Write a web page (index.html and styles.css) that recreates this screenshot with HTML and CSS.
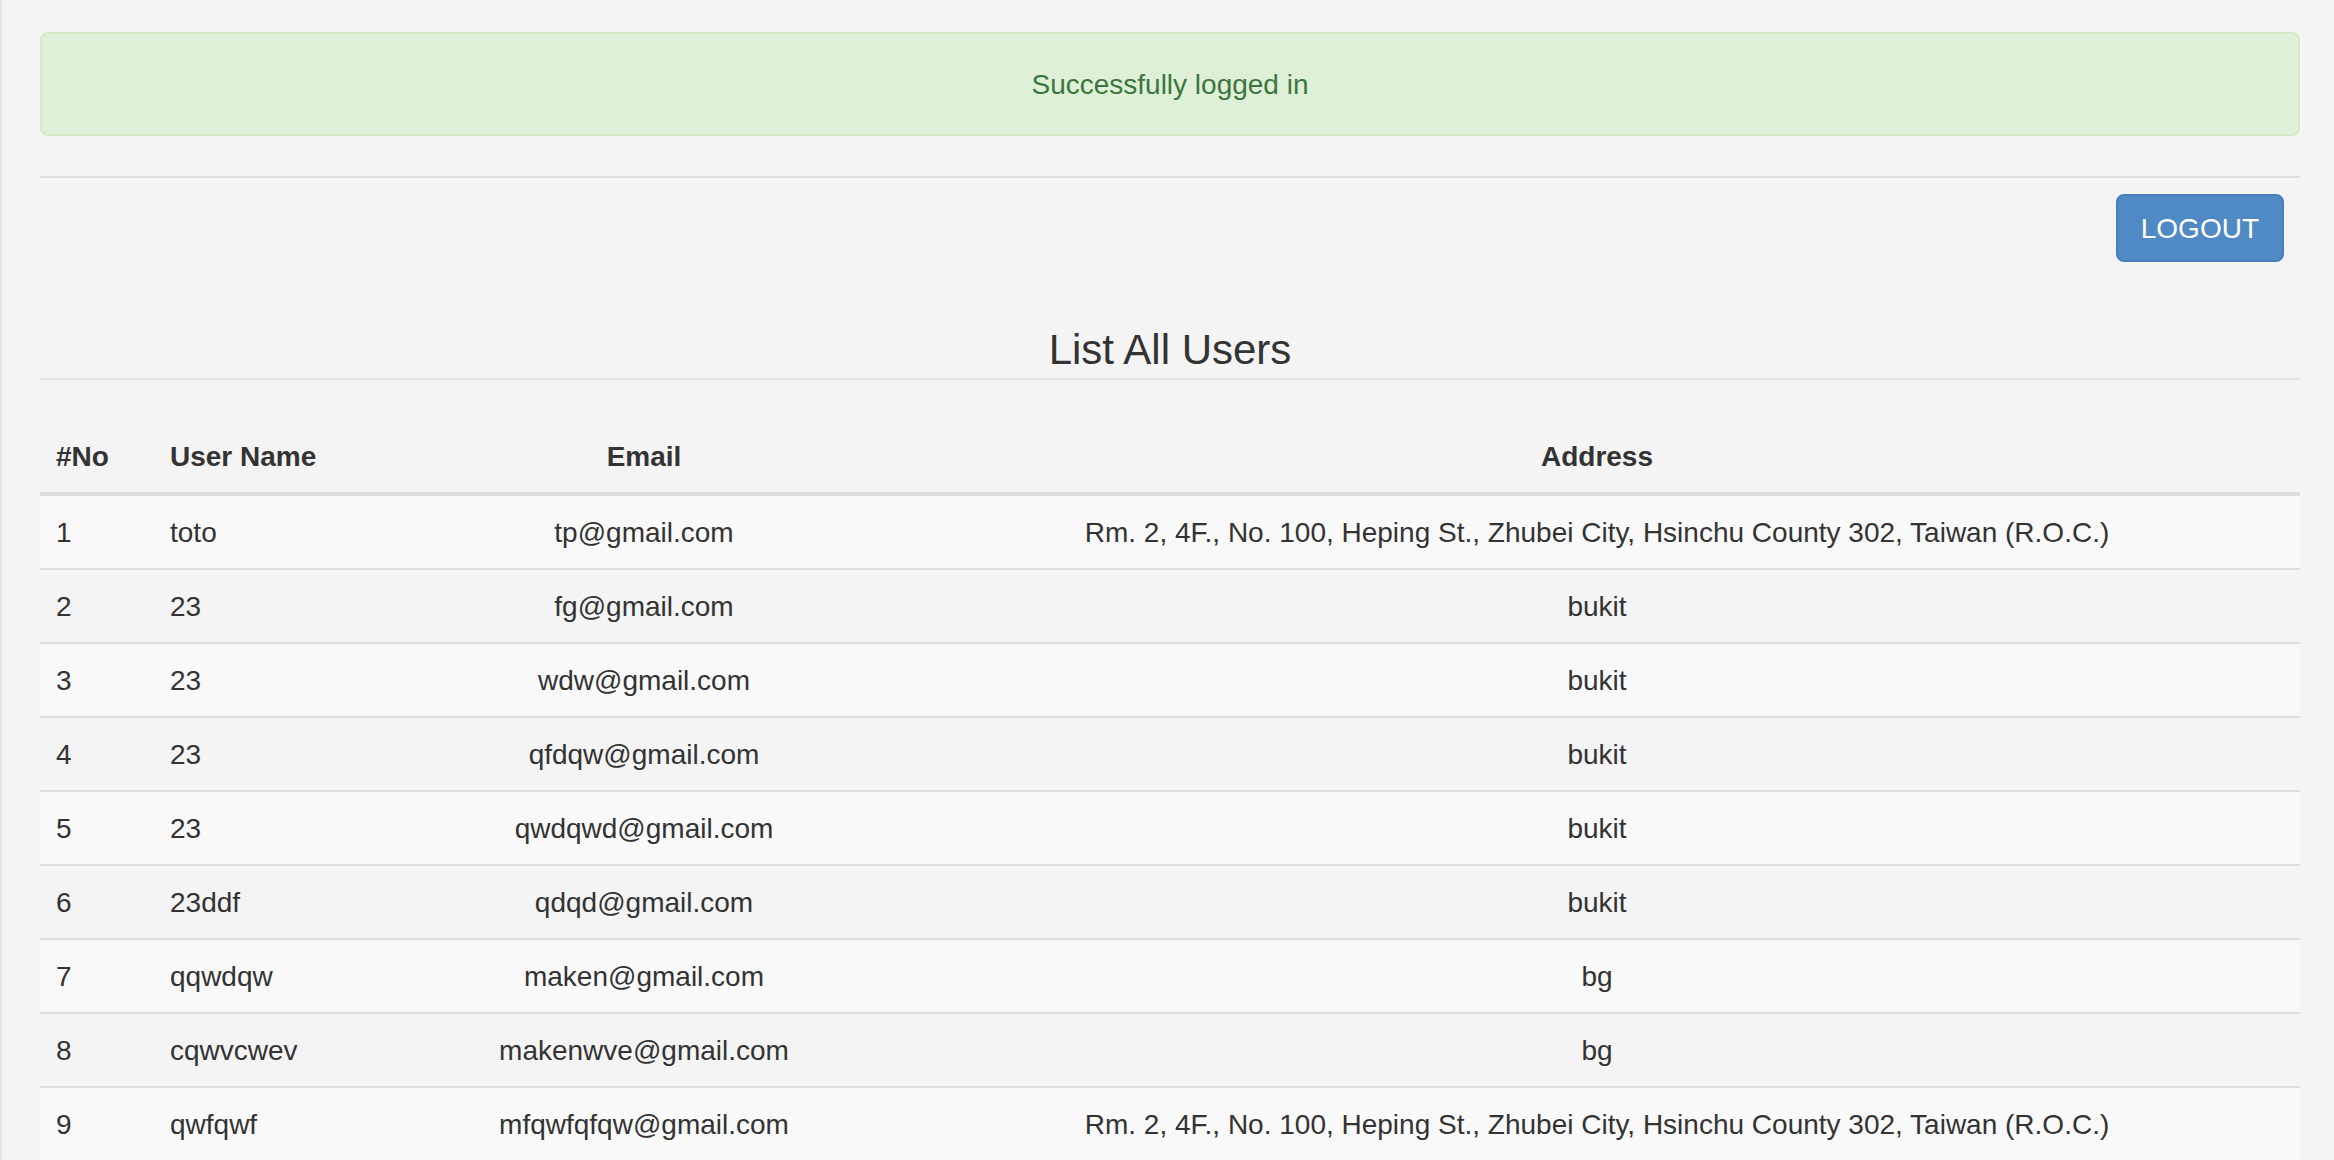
FILE: index.html
```html
<!DOCTYPE html>
<html lang="en">
<head>
<meta charset="utf-8">
<title>List All Users</title>
<link rel="stylesheet" href="styles.css">
</head>
<body>
<div class="page">
  <div class="alert">Successfully logged in</div>
  <hr class="rule">
  <div class="toolbar">
    <button class="btn-logout" type="button">LOGOUT</button>
  </div>
  <h2 class="page-title">List All Users</h2>
  <table class="users">
    <colgroup>
      <col class="c-no">
      <col class="c-name">
      <col class="c-email">
      <col class="c-addr">
    </colgroup>
    <thead>
      <tr>
        <th>#No</th>
        <th>User Name</th>
        <th class="center">Email</th>
        <th class="center">Address</th>
      </tr>
    </thead>
    <tbody>
      <tr><td>1</td><td>toto</td><td class="center">tp@gmail.com</td><td class="center">Rm. 2, 4F., No. 100, Heping St., Zhubei City, Hsinchu County 302, Taiwan (R.O.C.)</td></tr>
      <tr><td>2</td><td>23</td><td class="center">fg@gmail.com</td><td class="center">bukit</td></tr>
      <tr><td>3</td><td>23</td><td class="center">wdw@gmail.com</td><td class="center">bukit</td></tr>
      <tr><td>4</td><td>23</td><td class="center">qfdqw@gmail.com</td><td class="center">bukit</td></tr>
      <tr><td>5</td><td>23</td><td class="center">qwdqwd@gmail.com</td><td class="center">bukit</td></tr>
      <tr><td>6</td><td>23ddf</td><td class="center">qdqd@gmail.com</td><td class="center">bukit</td></tr>
      <tr><td>7</td><td>qqwdqw</td><td class="center">maken@gmail.com</td><td class="center">bg</td></tr>
      <tr><td>8</td><td>cqwvcwev</td><td class="center">makenwve@gmail.com</td><td class="center">bg</td></tr>
      <tr><td>9</td><td>qwfqwf</td><td class="center">mfqwfqfqw@gmail.com</td><td class="center">Rm. 2, 4F., No. 100, Heping St., Zhubei City, Hsinchu County 302, Taiwan (R.O.C.)</td></tr>
    </tbody>
  </table>
</div>
</body>
</html>
```

FILE: styles.css
```css
html, body {
  margin: 0;
  padding: 0;
}

body {
  background: #f4f4f4;
  border-left: 2px solid #e6e6e6;
  min-height: 100vh;
  font-family: "Liberation Sans", Arial, Helvetica, sans-serif;
  font-size: 28px;
  line-height: 40px;
  color: #333333;
}

.page {
  padding: 32px 34px 0 38px;
}

.alert {
  background: #dff0d8;
  border: 2px solid #d6e9c6;
  border-radius: 8px;
  color: #3c763d;
  padding: 31px 30px 29px;
  text-align: center;
  margin-bottom: 40px;
}

.rule {
  margin: 0;
  border: 0;
  border-top: 2px solid #dddddd;
  height: 0;
}

.toolbar {
  display: flex;
  justify-content: flex-end;
  padding-top: 16px;
  padding-right: 16px;
}

.btn-logout {
  font-family: "Liberation Sans", Arial, Helvetica, sans-serif;
  font-size: 28px;
  line-height: 40px;
  color: #ffffff;
  background: #508ac4;
  border: 2px solid #4a80b9;
  border-radius: 8px;
  padding: 13px 23px 11px;
  margin: 0;
  cursor: pointer;
}

.page-title {
  margin: 65px 0 40px;
  padding-bottom: 5px;
  border-bottom: 2px solid #e3e3e3;
  font-size: 42px;
  line-height: 46px;
  font-weight: normal;
  text-align: center;
  color: #333333;
}

.users {
  width: 100%;
  border-collapse: collapse;
  table-layout: fixed;
  border-spacing: 0;
}

.c-no { width: 114px; }
.c-name { width: 240px; }
.c-email { width: 500px; }

.users th {
  padding: 17px 16px 15px;
  text-align: left;
  font-weight: bold;
  border-bottom: 4px solid #dddddd;
  vertical-align: bottom;
}

.users td {
  padding: 17px 16px 15px;
  border-top: 2px solid #dddddd;
  white-space: nowrap;
}

.users tbody tr:nth-child(odd) {
  background: #f9f9f9;
}

.users .center {
  text-align: center;
}
```
